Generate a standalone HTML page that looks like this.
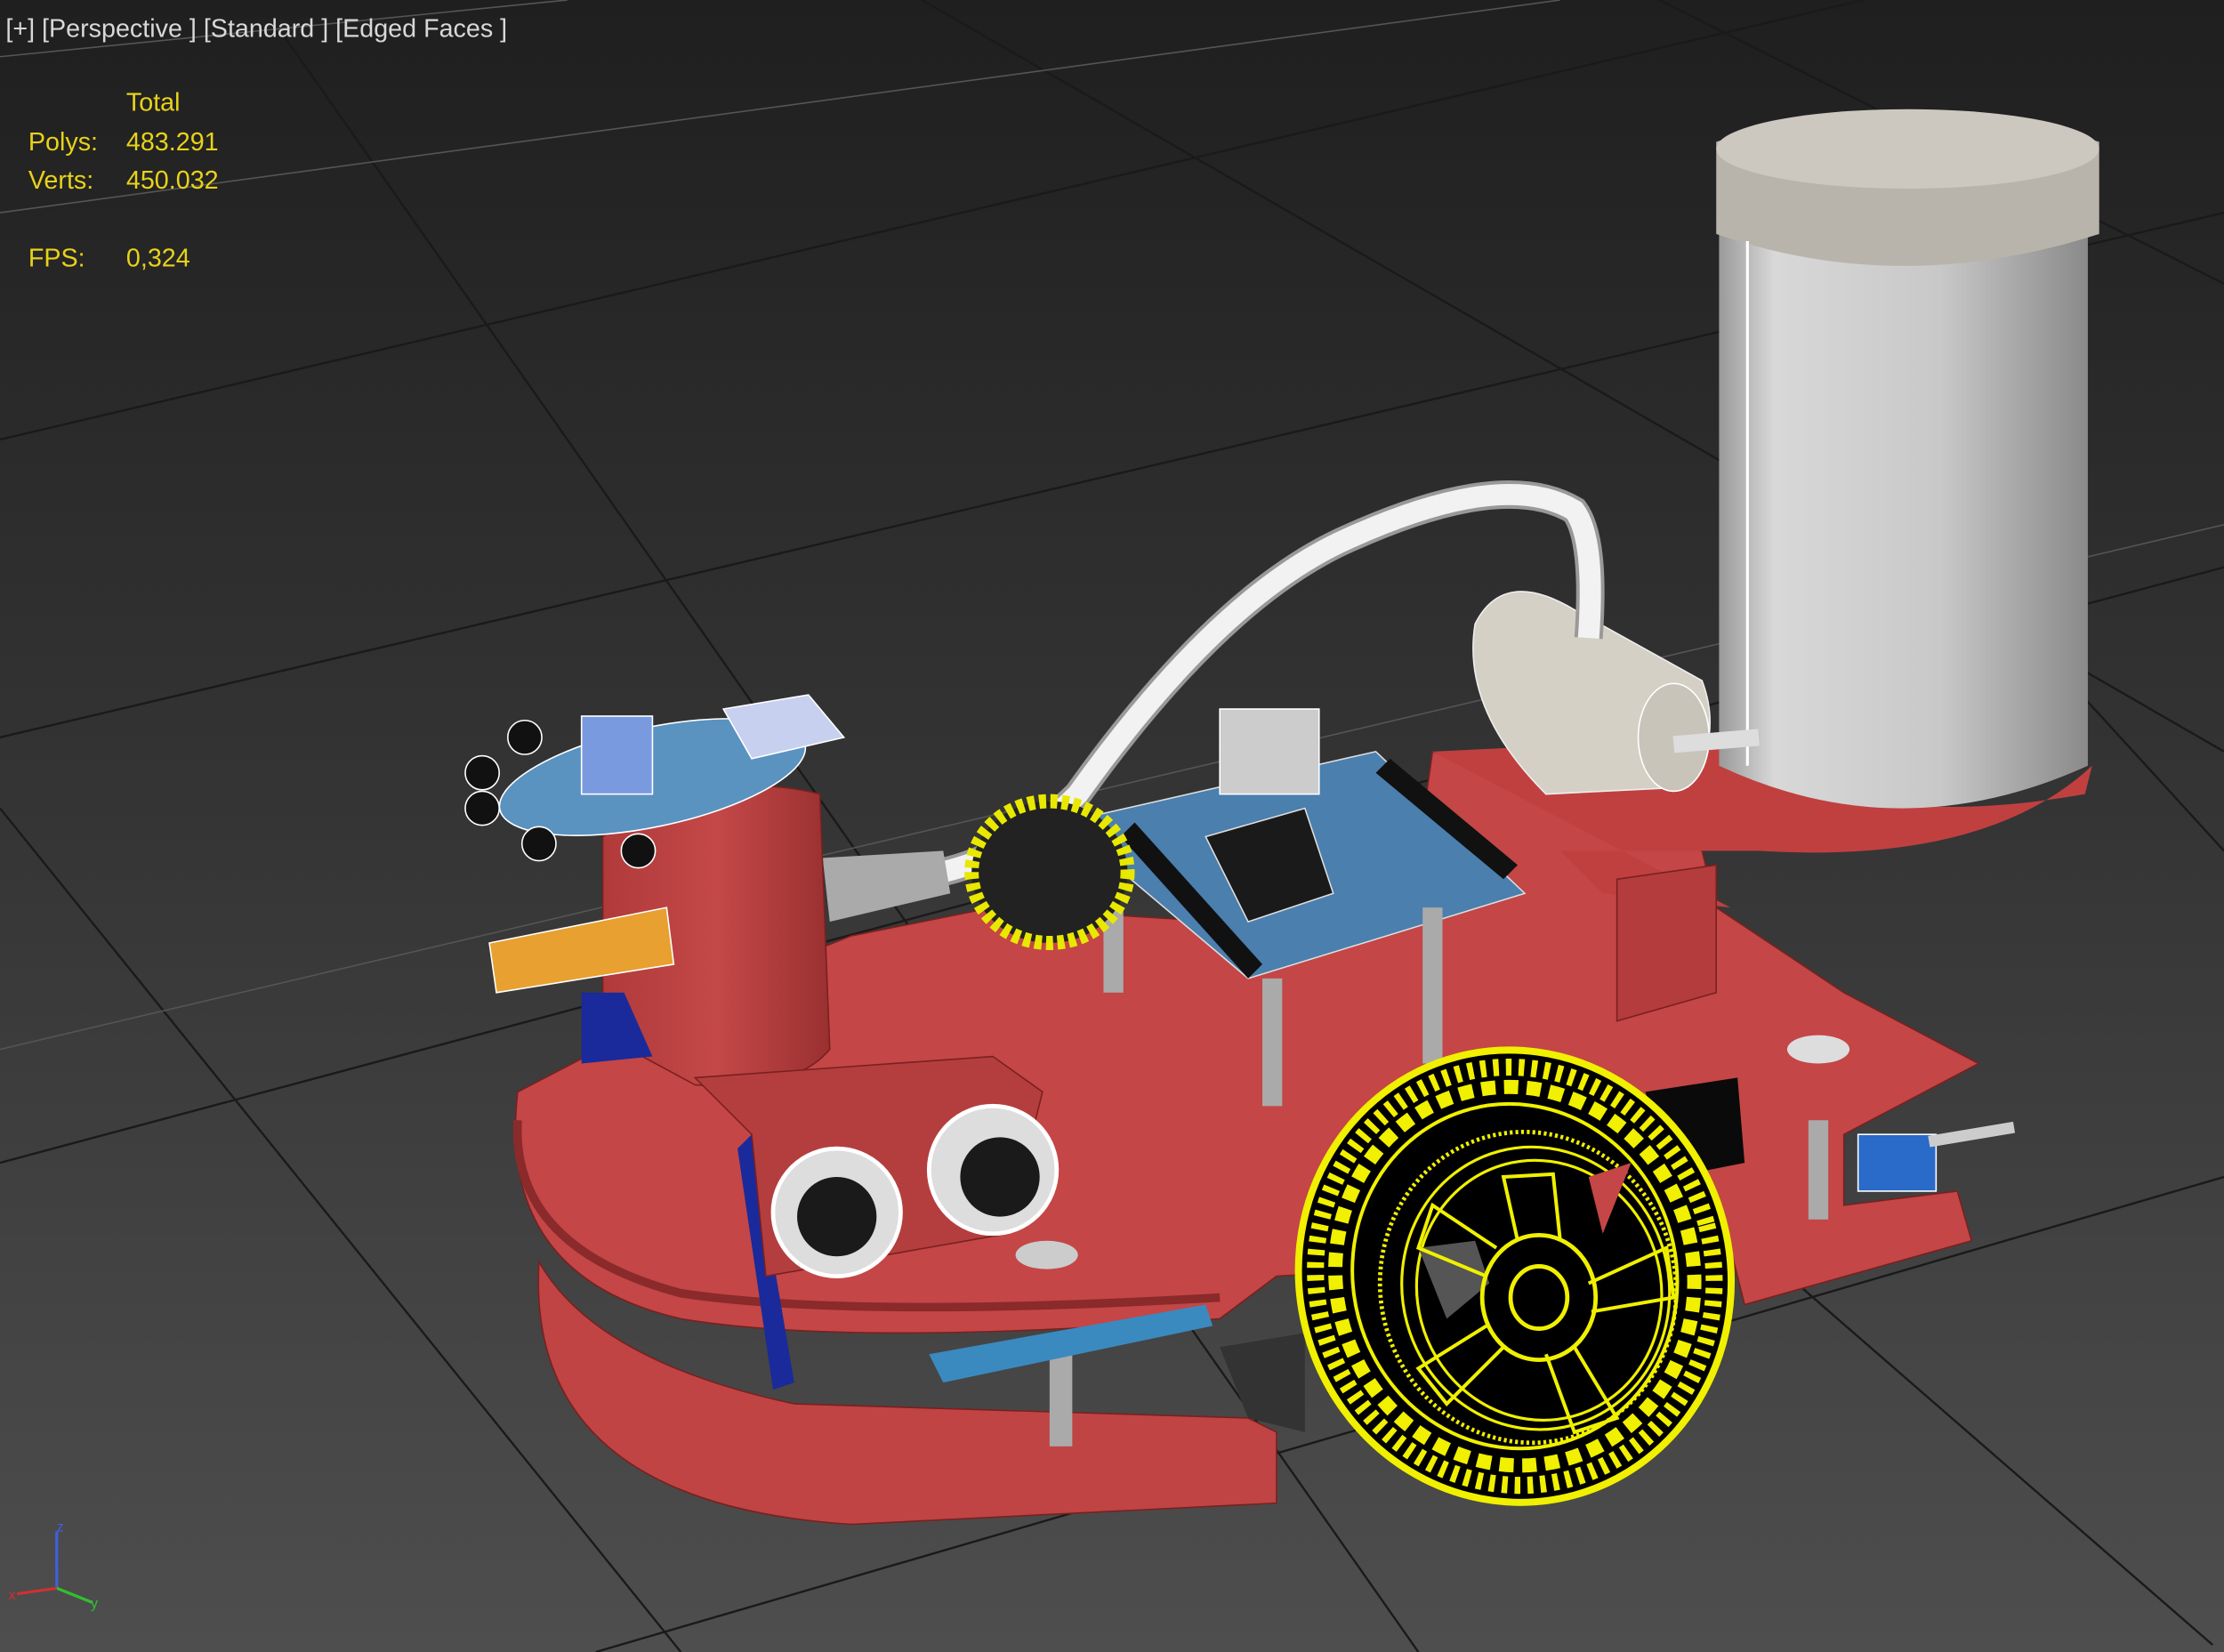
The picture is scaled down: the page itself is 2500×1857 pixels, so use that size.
<!DOCTYPE html>
<html><head><meta charset="utf-8"><style>
html,body{margin:0;padding:0;background:#2a2a2a;}
svg{display:block}
text{font-family:"Liberation Sans","DejaVu Sans",sans-serif;}
</style></head><body>
<svg width="2500" height="1857" viewBox="0 0 1568 1165" preserveAspectRatio="none" xmlns="http://www.w3.org/2000/svg">
<defs>
<linearGradient id="bg" x1="0" y1="0" x2="0" y2="1">
<stop offset="0" stop-color="#1f1f1f"/><stop offset="0.5" stop-color="#353535"/><stop offset="1" stop-color="#4e4e4e"/></linearGradient>
<linearGradient id="cyl" x1="0" y1="0" x2="1" y2="0">
<stop offset="0" stop-color="#9a9a9a"/><stop offset="0.15" stop-color="#d8d8d8"/><stop offset="0.6" stop-color="#c8c8c8"/><stop offset="1" stop-color="#8a8a8a"/></linearGradient>
<linearGradient id="redc" x1="0" y1="0" x2="1" y2="0">
<stop offset="0" stop-color="#b03a3a"/><stop offset="0.5" stop-color="#c44848"/><stop offset="1" stop-color="#9a3030"/></linearGradient>
</defs>
<rect width="1568" height="1165" fill="url(#bg)"/>
<g stroke="#1a1a1a" stroke-width="1.5" fill="none">
<line x1="200" y1="25" x2="1000" y2="1165"/>
<line x1="650" y1="0" x2="1568" y2="530"/>
<line x1="1170" y1="0" x2="1568" y2="200"/>
<line x1="0" y1="310" x2="1568" y2="-60"/>
<line x1="0" y1="520" x2="1568" y2="150"/>
<line x1="0" y1="820" x2="1568" y2="400"/>
<line x1="420" y1="1165" x2="1568" y2="830"/>
<line x1="0" y1="570" x2="480" y2="1165"/>
<line x1="1100" y1="760" x2="1560" y2="1160"/>
<line x1="1230" y1="230" x2="1568" y2="600"/>
</g>
<g stroke="#555" stroke-width="1" fill="none">
<line x1="0" y1="150" x2="1100" y2="0"/>
<line x1="0" y1="40" x2="400" y2="0"/>
<line x1="0" y1="740" x2="1568" y2="370"/>
</g>
<text x="4" y="26" fill="#d8d8d8" font-size="18">[+] [Perspective ] [Standard ] [Edged Faces ]</text>
<g fill="#e8d21a" font-size="18">
<text x="89" y="78">Total</text>
<text x="20" y="106">Polys:</text><text x="89" y="106">483.291</text>
<text x="20" y="133">Verts:</text><text x="89" y="133">450.032</text>
<text x="20" y="188">FPS:</text><text x="89" y="188">0,324</text>
</g>
<!-- lower plate -->
<path d="M380 890 Q370 1060 600 1075 L900 1060 L900 1010 L880 1000 L560 990 Q420 960 380 890Z" fill="#c04444" stroke="#7a2020"/>
<path d="M860 950 L920 940 L920 1010 L880 1000Z" fill="#333"/>
<!-- upper plate -->
<path d="M365 770 Q350 900 480 930 Q600 950 860 930 L900 900 L1220 880 L1230 920 L1390 875 L1380 840 L1300 850 L1300 800 L1395 750 L1300 700 L1210 640 L1200 600 L1150 580 L1010 530 L1000 600 L860 650 L700 640 L600 660 L500 700 Z" fill="#c44646" stroke="#7a2020"/>
<path d="M365 790 Q360 880 480 912 Q600 930 860 915" fill="none" stroke="#8a2a2a" stroke-width="6"/>
<!-- tank base -->
<path d="M1010 530 L1220 520 Q1300 590 1470 560 L1475 540 Q1400 610 1240 600 L1100 600 L1130 630 L1220 640 Z" fill="#c04040"/>
<path d="M1140 620 L1210 610 L1210 700 L1140 720 Z" fill="#b53c3c" stroke="#7a2020"/>
<!-- tank -->
<path d="M1212 120 L1212 540 Q1340 600 1472 540 L1472 120 Z" fill="url(#cyl)"/>
<path d="M1210 100 Q1340 60 1480 100 L1480 165 Q1340 210 1210 165 Z" fill="#b8b4ac"/>
<ellipse cx="1345" cy="105" rx="135" ry="28" fill="#ccc8c0"/>
<path d="M1232 170 L1232 540" stroke="#fff" stroke-width="2"/>
<!-- pump -->
<path d="M1040 440 Q1060 400 1110 430 L1200 480 Q1215 520 1190 555 L1090 560 Q1030 500 1040 440Z" fill="#d4d0c6" stroke="#eee"/>
<ellipse cx="1180" cy="520" rx="25" ry="38" fill="#c8c4ba" stroke="#fff"/>
<path d="M1180 525 L1240 520" stroke="#ddd" stroke-width="12"/>
<!-- tube -->
<path d="M620 620 Q700 620 760 560 Q860 420 950 380 Q1060 330 1110 360 Q1125 380 1120 450" fill="none" stroke="#999" stroke-width="20"/>
<path d="M620 620 Q700 620 760 560 Q860 420 950 380 Q1060 330 1110 360 Q1125 380 1120 450" fill="none" stroke="#f2f2f2" stroke-width="15"/>
<path d="M580 605 L665 600 L670 630 L585 650 Z" fill="#aaa"/>
<!-- arduino -->
<path d="M750 580 L970 530 L1075 630 L880 690 Z" fill="#4a7fae" stroke="#ddd"/>
<path d="M790 590 L880 690 L890 680 L800 580 Z" fill="#111"/>
<path d="M980 535 L1070 610 L1060 620 L970 545Z" fill="#111"/>
<rect x="860" y="500" width="70" height="60" fill="#ccc" stroke="#fff"/>
<path d="M850 590 L920 570 L940 630 L880 650Z" fill="#1a1a1a" stroke="#ddd"/>
<!-- standoffs -->
<g fill="#aaa"><rect x="778" y="640" width="14" height="60"/><rect x="890" y="690" width="14" height="90"/><rect x="1003" y="640" width="14" height="110"/><rect x="1275" y="790" width="14" height="70"/><rect x="740" y="940" width="16" height="80"/></g>
<!-- yellow wireframe wheel behind -->
<ellipse cx="740" cy="615" rx="55" ry="50" fill="#222" stroke="#e8e800" stroke-width="10" stroke-dasharray="5 3"/>
<!-- red cylinder -->
<path d="M425 590 L425 730 L490 765 Q560 770 585 740 L578 560 Q500 540 425 590Z" fill="url(#redc)" stroke="#7a2020"/>
<!-- orange cone -->
<path d="M345 665 L470 640 L475 680 L350 700Z" fill="#e8a030" stroke="#fff"/>
<!-- blue part -->
<path d="M410 700 L440 700 L460 745 L410 750Z" fill="#1a2a9a"/>
<path d="M520 810 L545 980 L560 975 L530 800Z" fill="#1a2a9a"/>
<!-- sensor board top -->
<ellipse cx="460" cy="548" rx="110" ry="35" fill="#5a92c0" stroke="#fff" transform="rotate(-12 460 548)"/>
<rect x="410" y="505" width="50" height="55" fill="#7a9ae0" stroke="#fff"/>
<path d="M510 500 L570 490 L595 520 L530 535Z" fill="#c8d0f0" stroke="#fff"/>
<g fill="#111" stroke="#fff"><circle cx="370" cy="520" r="12"/><circle cx="340" cy="545" r="12"/><circle cx="340" cy="570" r="12"/><circle cx="380" cy="595" r="12"/><circle cx="450" cy="600" r="12"/></g>
<!-- ultrasonic box -->
<path d="M490 760 L530 800 L540 900 L710 870 L735 770 L700 745 Z" fill="#b43e3e" stroke="#7a2020"/>
<circle cx="590" cy="855" r="45" fill="#ddd" stroke="#fff" stroke-width="3"/><circle cx="590" cy="858" r="28" fill="#1a1a1a"/>
<circle cx="700" cy="825" r="45" fill="#ddd" stroke="#fff" stroke-width="3"/><circle cx="705" cy="830" r="28" fill="#1a1a1a"/>
<ellipse cx="738" cy="885" rx="22" ry="10" fill="#ccc"/>
<ellipse cx="1282" cy="740" rx="22" ry="10" fill="#ddd"/>
<!-- blue board bottom -->
<path d="M655 955 L850 920 L855 935 L665 975Z" fill="#3a8ac0"/>
<!-- switch -->
<rect x="1310" y="800" width="55" height="40" fill="#2a6ac8" stroke="#fff"/>
<path d="M1360 805 L1420 795" stroke="#ccc" stroke-width="8"/>
<!-- black cutout -->
<path d="M1160 770 L1225 760 L1230 820 L1180 830Z" fill="#0a0a0a"/>
<!-- wheel -->
<g transform="rotate(-15 1068 900)">
<ellipse cx="1068" cy="900" rx="152" ry="160" fill="#000" stroke="#f0f000" stroke-width="5"/>
<ellipse cx="1068" cy="900" rx="140" ry="148" fill="none" stroke="#f0f000" stroke-width="12" stroke-dasharray="4 5"/>
<ellipse cx="1068" cy="900" rx="126" ry="134" fill="none" stroke="#f0f000" stroke-width="10" stroke-dasharray="10 6"/>
<ellipse cx="1068" cy="900" rx="114" ry="122" fill="none" stroke="#f0f000" stroke-width="2.5"/>
<ellipse cx="1075" cy="910" rx="104" ry="110" fill="none" stroke="#f0f000" stroke-width="3" stroke-dasharray="2 2"/>
<ellipse cx="1080" cy="912" rx="94" ry="100" fill="none" stroke="#f0f000" stroke-width="2"/>
<ellipse cx="1082" cy="914" rx="86" ry="92" fill="none" stroke="#f0f000" stroke-width="2"/>
</g>
<g fill="#555"><path d="M1000 880 L1040 875 L1050 905 L1020 930Z"/><path d="M1120 830 L1150 820 L1130 870Z" fill="#c44646"/></g>
<ellipse cx="1085" cy="915" rx="40" ry="44" fill="none" stroke="#f0f000" stroke-width="3"/>
<ellipse cx="1085" cy="915" rx="20" ry="22" fill="none" stroke="#f0f000" stroke-width="3"/>
<g stroke="#f0f000" stroke-width="2.5" fill="none">
<path d="M1070 875 L1060 830 L1095 828 L1100 875"/>
<path d="M1120 905 L1175 880 L1180 915 L1122 925"/>
<path d="M1110 950 L1140 1000 L1110 1010 L1090 955"/>
<path d="M1060 950 L1020 990 L1000 965 L1048 935"/>
<path d="M1048 900 L1000 880 L1010 850 L1055 880"/>
</g>
<!-- axes -->
<path d="M40 1120 L40 1080" stroke="#4060e0" stroke-width="2"/>
<path d="M40 1120 L65 1130" stroke="#30c030" stroke-width="2"/>
<path d="M40 1120 L12 1124" stroke="#d03030" stroke-width="2"/>
<text x="40" y="1080" fill="#4060e0" font-size="10">z</text>
<text x="64" y="1134" fill="#30c030" font-size="10">y</text>
<text x="6" y="1128" fill="#d03030" font-size="10">x</text>
</svg>
</body></html>
